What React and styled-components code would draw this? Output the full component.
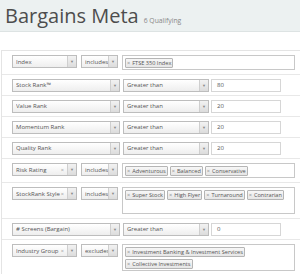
import styled, { createGlobalStyle } from 'styled-components';

const Global = createGlobalStyle`
    body {
        margin: 0;
        background: #fff;
        font-family: "Open Sans", "Liberation Sans", sans-serif;
        color: #555;
    }
`;

const Header = styled.div`
    height: 32px;
    background: #ecf1f1;
    border-bottom: 1px solid #dde3e3;
    display: flex;
    align-items: baseline;
    padding: 4px 0 0 5px;
    box-sizing: border-box;
`;

const Title = styled.h1`
    margin: 0;
    font-size: 20px;
    font-weight: 400;
    color: #4d4d4d;
    line-height: 24px;
`;

const Sub = styled.span`
    font-size: 6.8px;
    color: #888;
    margin-left: 5px;
`;

const Panel = styled.div`
    margin: 18px 0 0 1px;
    border-top: 1px solid #e4e4e4;
    border-left: 1px solid #e4e4e4;
`;

const Row = styled.div`
    display: flex;
    align-items: flex-start;
    gap: ${p => p.$gap || 3}px;
    padding: ${p => p.$pad}px 0 ${p => p.$pad}px 10px;
    border-bottom: 1px solid #e8e8e8;
`;

const Select = styled.div`
    width: ${p => p.$w}px;
    height: 13px;
    flex: none;
    box-sizing: border-box;
    border: 1px solid #bdbdbd;
    background: linear-gradient(#ffffff, #eeeeee);
    display: flex;
    align-items: center;
    font-size: 6px;
    color: #555;
    padding-left: 3px;
`;

const Label = styled.span`
    flex: 1;
    white-space: nowrap;
    overflow: hidden;
`;

const Clear = styled.span`
    font-size: 5.5px;
    color: #999;
    margin-right: 3px;
`;

const Arrow = styled.span`
    width: 8px;
    align-self: stretch;
    border-left: 1px solid #cfcfcf;
    background: linear-gradient(#f2f2f2, #dcdcdc);
    display: flex;
    align-items: center;
    justify-content: center;
    font-size: 4px;
    color: #888;
`;

const Input = styled.div`
    width: 70px;
    height: 13px;
    box-sizing: border-box;
    border: 1px solid #d6d6d6;
    background: #fff;
    display: flex;
    align-items: center;
    padding-left: 5px;
    font-size: 6px;
    color: #555;
    margin-left: -1px;
`;

const TagBox = styled.div`
    width: 173px;
    height: ${p => p.$h}px;
    flex: none;
    box-sizing: border-box;
    border: 1px solid #c8c8c8;
    background: #fff;
    padding: 2px 0 0 2px;
    line-height: 0;
`;

const Tag = styled.span`
    display: inline-flex;
    vertical-align: top;
    height: 10px;
    box-sizing: border-box;
    border: 1px solid #b5b5b5;
    border-radius: 1px;
    background: linear-gradient(#f7f7f7, #e6e6e6);
    font-size: 5.6px;
    line-height: 8px;
    color: #555;
    align-items: center;
    padding: 0 1px;
    margin: 0 2px 2px 0;
    white-space: nowrap;
    &::before {
        content: '×';
        color: #888;
        margin-right: 2px;
    }
`;

const Sel = ({ w, label, clear }) => (
    <Select $w={w}>
        <Label>{label}</Label>
        {clear && <Clear>×</Clear>}
        <Arrow>▼</Arrow>
    </Select>
);

const Compare = ({ label, value }) => (
    <Row $pad={3.5}>
        <Sel w={108} label={label} />
        <Sel w={86} label="Greater than" />
        <Input>{value}</Input>
    </Row>
);

const Multi = ({ label, op, clear, tags, h = 15 }) => (
    <Row $pad={4} $gap={4}>
        <Sel w={65} label={label} clear={clear} />
        <Sel w={37} label={op} />
        <TagBox $h={h}>
            {tags.map(t => <Tag key={t}>{t}</Tag>)}
        </TagBox>
    </Row>
);

const App = () => {
    return (<>
        <Global />
        <Header>
            <Title>Bargains Meta</Title>
            <Sub>6 Qualifying</Sub>
        </Header>
        <Panel>
            <Multi label="Index" op="includes" tags={['FTSE 350 Index']} />
            <Compare label="Stock Rank™" value="80" />
            <Compare label="Value Rank" value="20" />
            <Compare label="Momentum Rank" value="20" />
            <Compare label="Quality Rank" value="20" />
            <Multi label="Risk Rating" op="includes" clear tags={['Adventurous', 'Balanced', 'Conservative']} />
            <Multi label="StockRank Style" op="includes" clear h={27} tags={['Super Stock', 'High Flyer', 'Turnaround', 'Contrarian']} />
            <Compare label="# Screens (Bargain)" value="0" />
            <Multi label="Industry Group" op="excludes" clear h={27} tags={['Investment Banking & Investment Services', 'Collective Investments']} />
        </Panel>
    </>);
};
export default App;
